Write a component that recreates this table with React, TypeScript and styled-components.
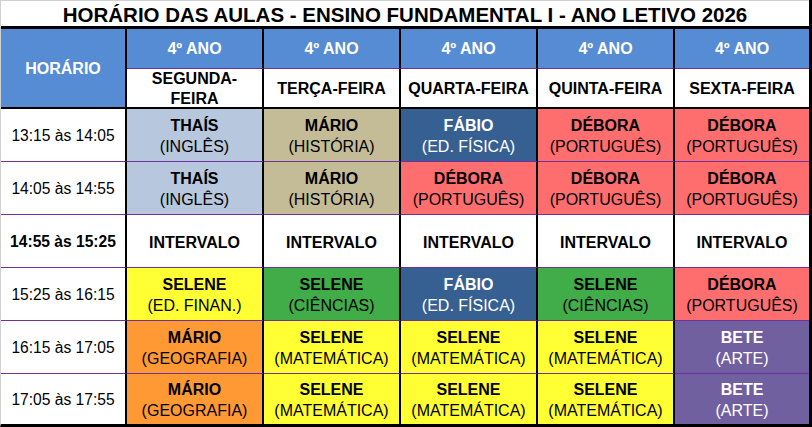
import React from 'react';
import styled, { createGlobalStyle } from 'styled-components';

const GlobalStyle = createGlobalStyle`
  html, body {
    margin: 0;
    padding: 0;
    background: #ffffff;
  }
  body {
    font-family: "Liberation Sans", Arial, sans-serif;
    color: #000;
  }
`;

const colors = {
  header: '#558cd4',
  sky: '#b7c7dd',
  tan: '#c4bc96',
  navy: '#366092',
  red: '#ff6e6e',
  yellow: '#ffff33',
  green: '#40ad48',
  orange: '#ff9933',
  violet: '#7160a0',
  white: '#ffffff',
};

type Tone = keyof typeof colors;

type Slot = { name: string; subject?: string; tone: Tone };

const light: Tone[] = ['navy', 'violet'];

const debora: Slot = { name: 'DÉBORA', subject: '(PORTUGUÊS)', tone: 'red' };
const thais: Slot = { name: 'THAÍS', subject: '(INGLÊS)', tone: 'sky' };
const marioHist: Slot = { name: 'MÁRIO', subject: '(HISTÓRIA)', tone: 'tan' };
const marioGeo: Slot = { name: 'MÁRIO', subject: '(GEOGRAFIA)', tone: 'orange' };
const fabio: Slot = { name: 'FÁBIO', subject: '(ED. FÍSICA)', tone: 'navy' };
const seleneMat: Slot = { name: 'SELENE', subject: '(MATEMÁTICA)', tone: 'yellow' };
const seleneCie: Slot = { name: 'SELENE', subject: '(CIÊNCIAS)', tone: 'green' };
const seleneFin: Slot = { name: 'SELENE', subject: '(ED. FINAN.)', tone: 'yellow' };
const bete: Slot = { name: 'BETE', subject: '(ARTE)', tone: 'violet' };
const pause: Slot = { name: 'INTERVALO', tone: 'white' };

const days = ['SEGUNDA-FEIRA', 'TERÇA-FEIRA', 'QUARTA-FEIRA', 'QUINTA-FEIRA', 'SEXTA-FEIRA'];

const rows: { time: string; bold?: boolean; slots: Slot[] }[] = [
  { time: '13:15 às 14:05', slots: [thais, marioHist, fabio, debora, debora] },
  { time: '14:05 às 14:55', slots: [thais, marioHist, debora, debora, debora] },
  { time: '14:55 às 15:25', bold: true, slots: [pause, pause, pause, pause, pause] },
  { time: '15:25 às 16:15', slots: [seleneFin, seleneCie, fabio, seleneCie, debora] },
  { time: '16:15 às 17:05', slots: [marioGeo, seleneMat, seleneMat, seleneMat, bete] },
  { time: '17:05 às 17:55', slots: [marioGeo, seleneMat, seleneMat, seleneMat, bete] },
];

export default function App() {
  return (
    <>
      <GlobalStyle />
      <Sheet>
        <Title>HORÁRIO DAS AULAS - ENSINO FUNDAMENTAL I - ANO LETIVO 2026</Title>
        <Grid>
          <TimeHead>HORÁRIO</TimeHead>
          {days.map((d, i) => (
            <GradeHead key={d} $last={i === days.length - 1}>
              4º ANO
            </GradeHead>
          ))}
          {days.map((d, i) => (
            <DayHead key={d} $last={i === days.length - 1}>
              {d === 'SEGUNDA-FEIRA' ? (
                <>
                  SEGUNDA-
                  <br />
                  FEIRA
                </>
              ) : (
                d
              )}
            </DayHead>
          ))}
          {rows.map((row, r) => {
            const bottom = r === rows.length - 1;
            return (
              <React.Fragment key={row.time}>
                <TimeCell $bold={row.bold} $bottom={bottom}>
                  {row.time}
                </TimeCell>
                {row.slots.map((s, c) => (
                  <Lesson
                    key={c}
                    $tone={s.tone}
                    $last={c === row.slots.length - 1}
                    $bottom={bottom}
                  >
                    <Teacher>{s.name}</Teacher>
                    {s.subject && <Subject>{s.subject}</Subject>}
                  </Lesson>
                ))}
              </React.Fragment>
            );
          })}
        </Grid>
      </Sheet>
    </>
  );
}

const Sheet = styled.div`
  width: 812px;
  height: 427px;
  box-sizing: border-box;
  border-left: 1px solid #d0d0d0;
  border-right: 3px solid #000;
  border-bottom: 3px solid #000;
  display: flex;
  flex-direction: column;
  overflow: hidden;
`;

const Title = styled.div`
  height: 29px;
  box-sizing: border-box;
  border-top: 1px solid #d0d0d0;
  border-bottom: 3px solid #000;
  padding-top: 2px;
  font-size: 20.5px;
  font-weight: 700;
  line-height: 23px;
  text-align: center;
  white-space: nowrap;
`;

const Grid = styled.div`
  display: grid;
  grid-template-columns: 126px repeat(4, 137px) 134px;
  grid-template-rows: 40px 40px repeat(5, 53px) 50px;
  font-size: 16px;
`;

const Cell = styled.div<{ $last?: boolean; $bottom?: boolean }>`
  box-sizing: border-box;
  display: flex;
  flex-direction: column;
  align-items: center;
  justify-content: center;
  text-align: center;
  border-right: ${(p) => (p.$last ? 'none' : '2px solid #000')};
  border-bottom: ${(p) => (p.$bottom ? 'none' : '1px solid #7030a0')};
  overflow: hidden;
`;

const TimeHead = styled(Cell)`
  grid-row: span 2;
  background: ${colors.header};
  color: #fff;
  font-weight: 700;
  border-bottom: 2px solid #000;
  padding-top: 2px;
`;

const GradeHead = styled(Cell)`
  background: ${colors.header};
  color: #fff;
  font-weight: 700;
  padding-top: 1px;
`;

const DayHead = styled(Cell)`
  background: #fff;
  font-weight: 700;
  line-height: 19.5px;
  border-bottom: 2px solid #000;
  padding-top: 1px;
`;

const TimeCell = styled(Cell)<{ $bold?: boolean }>`
  background: #fff;
  font-size: 15.6px;
  font-weight: ${(p) => (p.$bold ? 700 : 400)};
  padding-top: 2px;
`;

const Lesson = styled(Cell)<{ $tone: Tone }>`
  background: ${(p) => colors[p.$tone]};
  color: ${(p) => (light.includes(p.$tone) ? '#fff' : '#000')};
  line-height: 21px;
  padding-top: 2px;
`;

const Teacher = styled.div`
  font-weight: 700;
`;

const Subject = styled.div`
  font-weight: 400;
`;
